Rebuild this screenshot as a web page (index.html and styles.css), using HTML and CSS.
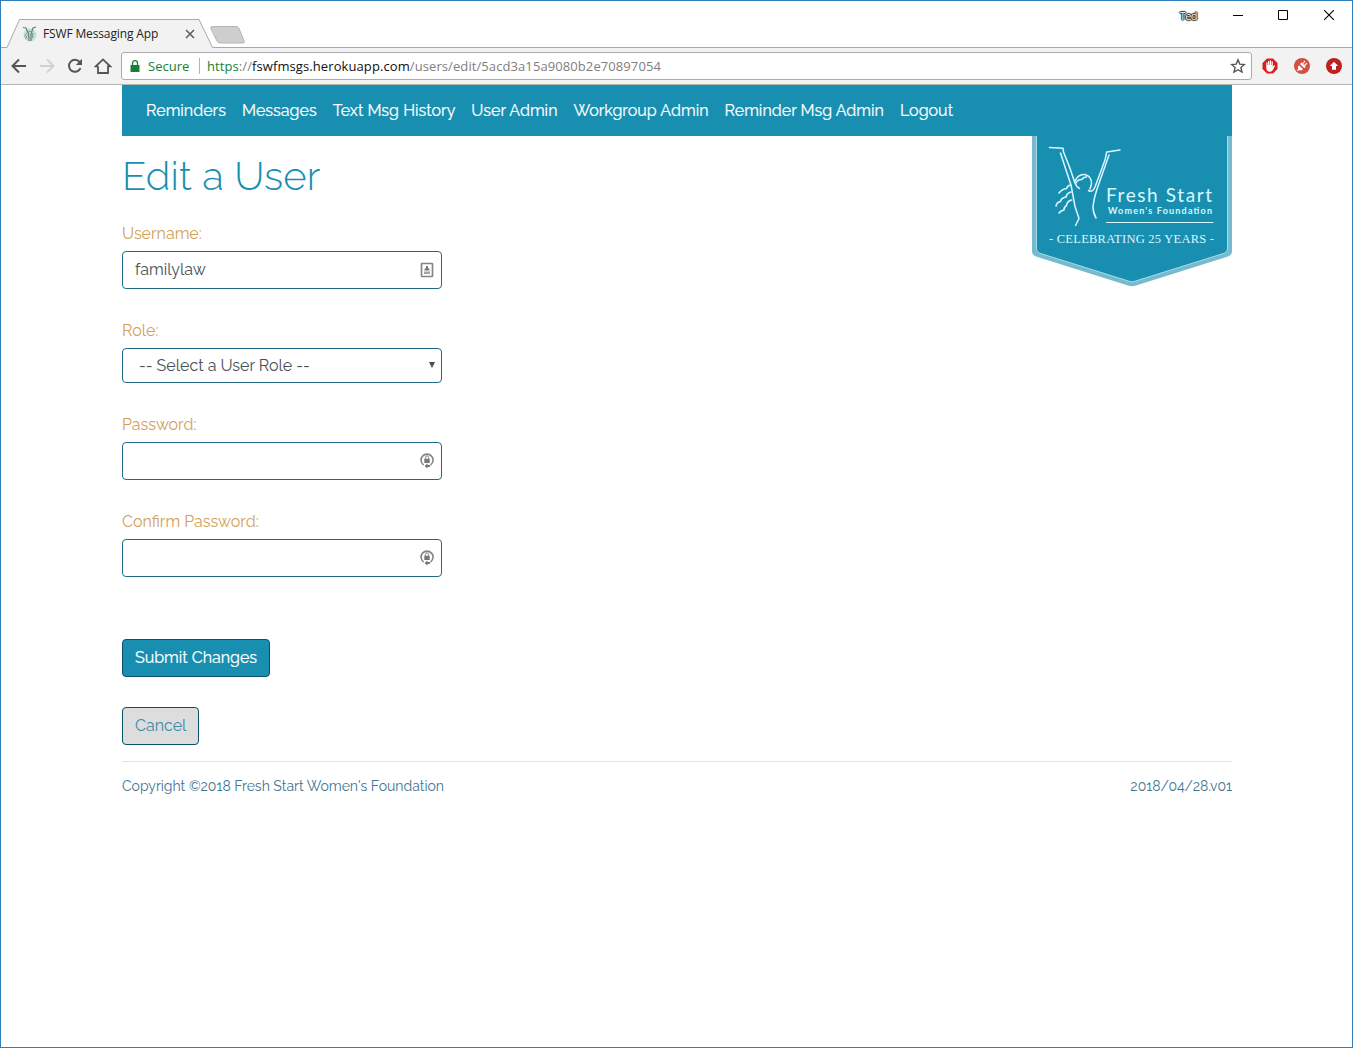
FILE: index.html
```html
<!DOCTYPE html>
<html lang="en">
<head>
<meta charset="utf-8">
<title>FSWF Messaging App</title>
<link rel="stylesheet" href="styles.css">
</head>
<body>
<div class="window">
  <header class="tabstrip">
    <div class="tab">
      <svg class="tab-shape" width="206" height="29" viewBox="0 0 206 29"><path d="M0 28.500L12.500 0.500H192L205.500 28.500V29H0Z" fill="#f2f2f2"/><path d="M0 28.500L12.500 0.500H192L205.500 28.500" fill="none" stroke="#a9a9a9"/></svg>
      <svg class="favicon" width="16" height="16" viewBox="0 0 16 16"><circle cx="8" cy="9" r="6.500" fill="#b9e3d3"/><path d="M1 1.500l3 .5 2.500 6 .5 7M14 1l-3 1-2 6v7" fill="none" stroke="#6d7b78" stroke-width="1.200"/><path d="M5.500 7c1-2 4-2 4.500 0M4.500 7.500l-2 3M5 10l-1.500 3M11 7l-.5 5" fill="none" stroke="#7d8d89"/></svg>
      <span class="tab-title">FSWF Messaging App</span>
      <svg class="tab-close" width="10" height="10" viewBox="0 0 10 10"><path d="M1 1l8 8M9 1l-8 8" stroke="#5a5a5a" stroke-width="1.500"/></svg>
    </div>
    <svg class="new-tab" width="36" height="18" viewBox="0 0 36 18"><path d="M2.500.5H26q2 0 3 2l5 12q1 2.500-1 2.500H10q-2 0-3-2L1 3Q0 .5 2.500.5Z" fill="#cecece" stroke="#b5b5b5"/></svg>
    <div class="controls">
      <span class="profile">Ted</span>
      <svg width="10" height="10" viewBox="0 0 10 10"><path d="M0 5.500h10" stroke="#000"/></svg>
      <svg width="10" height="10" viewBox="0 0 10 10"><path d="M.5.500h9v9h-9z" fill="none" stroke="#000"/></svg>
      <svg width="10" height="10" viewBox="0 0 10 10"><path d="M0 0l10 10M10 0L0 10" stroke="#000" stroke-width="1.100"/></svg>
    </div>
  </header>
  <div class="toolbar">
    <div class="tools">
      <svg width="16" height="16" viewBox="0 0 16 16"><path d="M15 8H2M8 1.500L1.500 8 8 14.500" fill="none" stroke="#555" stroke-width="2"/></svg>
      <svg width="16" height="16" viewBox="0 0 16 16"><path d="M1 8h13M8 1.500L14.500 8 8 14.500" fill="none" stroke="#d2d2d2" stroke-width="2"/></svg>
      <svg width="16" height="16" viewBox="0 0 16 16"><path d="M13.500 10.200A6 6 0 1 1 12.600 4" fill="none" stroke="#555" stroke-width="2"/><path d="M15 .8V7H8.800z" fill="#555"/></svg>
      <svg class="home" width="18" height="16" viewBox="0 0 18 16"><path d="M4 8.300H1.800L9 1.400l7.200 6.900H14V15H4V8.300" fill="none" stroke="#555" stroke-width="1.800"/></svg>
    </div>
    <div class="omnibox">
      <svg width="10" height="12" viewBox="0 0 10 12"><path d="M.5 5h9v7h-9z" fill="#188038"/><path d="M2.500 5.500V3.200a2.500 2.500 0 0 1 5 0v2.300" fill="none" stroke="#188038" stroke-width="1.300"/></svg>
      <span class="secure">Secure</span>
      <span class="url"><span class="scheme">https</span><span>://</span><span class="host">fswfmsgs.herokuapp.com</span><span class="path">/users/edit/5acd3a15a9080b2e70897054</span></span>
      <svg class="star" width="16" height="16" viewBox="0 0 16 16"><path d="M8 1.800l1.800 4.300 4.600.4-3.500 3 1.100 4.600L8 11.700l-4 2.400 1.100-4.600-3.500-3 4.600-.4z" fill="none" stroke="#555" stroke-width="1.400"/></svg>
    </div>
    <div class="extensions">
      <svg width="16" height="16" viewBox="0 0 16 16"><path d="M5 .5h6l4.500 4.500v6L11 15.500H5L.5 11V5z" fill="#d81e1e"/><path d="M4.300 7.500V4.700q.7-.9 1.200 0V7h.5V3.200q.7-.9 1.300 0V7h.5V2.700q.7-.9 1.300 0V7h.5V3.600q.7-.9 1.200 0v5.100l1-1.200q.9-.4 1.200.4L11 11.700q-1 2-3.200 2.100Q4.500 13.800 4.300 10z" fill="#fff"/></svg>
      <svg width="16" height="16" viewBox="0 0 16 16"><circle cx="8" cy="8" r="8" fill="#d05045"/><path d="M5 7.200l4 4q-2 1.800-4 .9L3.700 13.300 2.800 12.400 4.200 11Q3.300 9 5 7.200zM6 6l4.300 4.300 1.500-1.800L7.600 4.500z" fill="#fff"/><path d="M8.700 5.700l2.400-2.500M10.500 7.500l2.500-2.400" stroke="#fff" stroke-width="1.200"/></svg>
      <svg width="16" height="16" viewBox="0 0 16 16"><circle cx="8" cy="8" r="8" fill="#bd2020"/><path d="M8 3.800l4.200 4.200H10v3.800H6V8H3.800z" fill="#fff"/></svg>
    </div>
  </div>
  <div class="container">
    <nav class="navbar">
      <a>Reminders</a><a>Messages</a><a>Text Msg History</a><a>User Admin</a><a>Workgroup Admin</a><a>Reminder Msg Admin</a><a>Logout</a>
      <svg class="badge" width="200" height="151" viewBox="0 0 200 151">
        <path d="M0 0H200V115Q200 119 196 120.500L104 149.500Q100 151 96 149.500L4 120.500Q0 119 0 115Z" fill="#75bace"/>
        <path d="M4.500 -2H195.500V113Q195.500 116 192 117.300L102 145.500Q100 146.200 98 145.500L8 117.300Q4.500 116 4.500 113Z" fill="#188fb1" stroke="#a9dae7"/>
        <g fill="none" stroke="#d9f8ff" stroke-width="1.500" stroke-linecap="round" stroke-linejoin="round">
          <path d="M17.500 11.500L31 12.200 31.500 16 37.500 31 43 47Q44.500 51 47.500 52.500"/>
          <path d="M28.500 17L34.500 35.500 39 49 43 70.500 47 82.500 43.500 89.500"/>
          <path d="M88 14L74.700 16 73 24 63 51Q60.500 57 56.500 54.500"/>
          <path d="M77 19L71 36 64.700 54Q62 62 61 70.500 61 77 64 82"/>
          <path d="M42.500 46Q46 37.500 53 38.500 60 40.500 59.500 48 58.500 51 58 53M44 47Q46 43 50 43.500 51 41 54.500 41"/>
          <path d="M38.500 49Q35.500 49.500 34.500 52.500 30 53 27 57M39 56Q35 57 34 61 29 62 28.500 65.500 25 66 24 70M39.700 64Q35 65 34.500 69.500 32 71 32 74 29 74.500 27 77" stroke-width="1.600"/>
          <path d="M74.500 86.500H181" stroke-width="1"/>
        </g>
        <g fill="#d9f8ff">
          <text x="74" y="66" class="logo-name" textLength="106">Fresh Start</text>
          <text x="76" y="78" class="logo-sub" textLength="104">Women's Foundation</text>
          <text x="17" y="107" class="logo-years" textLength="165">- CELEBRATING 25 YEARS -</text>
        </g>
      </svg>
    </nav>
    <main>
      <h1>Edit a User</h1>
      <form>
        <div class="group"><label>Username:</label>
          <div class="field"><span>familylaw</span>
            <svg width="14" height="16" viewBox="0 0 14 16"><path d="M2 1.500h10q.5 0 .5.500v12q0 .5-.5.500H2q-.5 0-.5-.500V2q0-.5.500-.500z" fill="#fff" stroke="#858585" stroke-width="1.700"/><path d="M6 4h2v2l1.500 1v1.500h-5V7L6 6z" fill="#777"/><path d="M4 9.500h6v2.500H4z" fill="#a5a5a5"/></svg></div></div>
        <div class="group"><label>Role:</label>
          <div class="field select"><span>-- Select a User Role --</span>
            <svg width="6" height="6" viewBox="0 0 6 6"><path d="M0 0h6L3 6z" fill="#454c52"/></svg></div></div>
        <div class="group"><label>Password:</label>
          <div class="field"><span></span>
            <svg class="lock" width="14" height="17" viewBox="0 0 14 17"><path d="M3.600 13A6 6 0 1 1 10.500 13" fill="none" stroke="#858585" stroke-width="1.600"/><path d="M4.500 14l3-2.500v1.600h2.500v1.800H7.500V16.500zM4.300 6.800h5.400V11H4.300z" fill="#777"/><path d="M5.400 7V5.500a1.600 1.600 0 0 1 3.200 0V7" fill="none" stroke="#858585"/></svg></div></div>
        <div class="group"><label>Confirm Password:</label>
          <div class="field"><span></span>
            <svg class="lock" width="14" height="17" viewBox="0 0 14 17"><path d="M3.600 13A6 6 0 1 1 10.500 13" fill="none" stroke="#858585" stroke-width="1.600"/><path d="M4.500 14l3-2.500v1.600h2.500v1.800H7.500V16.500zM4.300 6.800h5.400V11H4.300z" fill="#777"/><path d="M5.400 7V5.500a1.600 1.600 0 0 1 3.200 0V7" fill="none" stroke="#858585"/></svg></div></div>
        <button type="button" class="btn submit">Submit Changes</button>
        <button type="button" class="btn cancel">Cancel</button>
      </form>
    </main>
    <footer><span>Copyright ©2018 Fresh Start Women's Foundation</span><span>2018/04/28.v01</span></footer>
  </div>
</div>
</body>
</html>
```
FILE: styles.css
```css
* { box-sizing: border-box; }
body { margin: 0; font-family: Raleway, Lato, sans-serif; font-size: 16px; line-height: 24px; color: #495057; background: #fff; }
svg { display: block; flex: none; }
.window { width: 1353px; height: 1048px; border: 1px solid #2f7fbd; overflow: hidden; }

/* browser frame */
.tabstrip { height: 47px; display: flex; align-items: flex-end; border-bottom: 1px solid #a9a9a9; padding-left: 6px; font-family: "Open Sans", "Noto Sans", sans-serif; }
.tab { position: relative; width: 206px; height: 28px; display: flex; align-items: center; padding: 1px 0 0 15px; }
.tab-shape { position: absolute; left: 0; top: 0; }
.favicon, .tab-title, .tab-close { position: relative; }
.tab-title { margin-left: 5px; padding-top: 1px; width: 142px; font-size: 12px; line-height: 16px; color: #222; letter-spacing: -0.14px; white-space: nowrap; }
.new-tab { margin: 0 0 3px -3px; }
.controls { margin-left: auto; align-self: flex-start; display: flex; padding: 9px 18px 0 0; gap: 36px; }
.controls svg:first-of-type { margin-right: -1px; }
.profile { font-size: 11px; line-height: 12px; color: #fff; letter-spacing: -0.6px; text-shadow: 0 0 1px #000, 1px 0 1px #222, -1px 0 1px #222, 0 1px 1px #222, 0 -1px 1px #222; }
.toolbar { height: 37px; display: flex; align-items: center; background: #f2f2f2; border-bottom: 1px solid #b5b5b5; padding-left: 10px; font-family: "Open Sans", "Noto Sans", sans-serif; }
.tools { width: 110px; display: flex; gap: 12px; }
.home { margin-left: -1px; }
.omnibox { width: 1131px; height: 28px; display: flex; align-items: center; background: #fff; border: 1px solid #ababab; border-radius: 3px; padding: 0 5px 0 8px; font-size: 13px; }
.secure { margin-left: 8px; width: 52px; height: 16px; line-height: 16px; color: #188038; border-right: 1px solid #b3b3b3; }
.url { margin-left: 7px; color: #808080; white-space: nowrap; letter-spacing: .09px; }
.scheme { color: #188038; }
.host { color: #111; }
.star { margin-left: auto; }
.extensions { display: flex; gap: 16px; margin-left: 10px; }

/* application page */
.container { width: 1110px; margin-left: 121px; }
.navbar { position: relative; height: 51px; display: flex; align-items: center; padding-left: 16px; background: #188fb1; color: #fff; }
.navbar a { padding: 0 8px; white-space: nowrap; letter-spacing: .025px; -webkit-text-stroke: .2px #fff; }
.badge { position: absolute; right: 0; top: 51px; }
.logo-name { font: 19.500px "Noto Sans", sans-serif; font-stretch: condensed; }
.logo-name { font: 19px Lato, sans-serif; }
.logo-sub { font: 700 9px Lato, sans-serif; }
.logo-years { font: 12.500px "Liberation Serif", serif; }
main { padding-top: 16px; }
h1 { margin: 0 0 19px; font-size: 40px; line-height: 48px; font-weight: 300; color: #188fb1; letter-spacing: .1px; }
form { display: flex; flex-direction: column; align-items: flex-start; }
.group { width: 320px; margin-bottom: 27px; }
label { display: block; height: 24px; margin-bottom: 8px; padding-top: 3px; color: #d2a05a; }
.field { height: 38px; display: flex; align-items: center; justify-content: space-between; border: 1px solid #206a87; border-radius: 4px; padding: 0 7px 0 12px; }
.select { height: 35px; padding: 0 6px 0 16px; }
.select svg { margin-bottom: 2px; }
.lock { margin-bottom: 1px; }
.btn { height: 38px; border: 1px solid #0c5069; border-radius: 4px; padding: 0 12px; font: inherit; text-align: left; white-space: nowrap; }
.submit { width: 148px; margin-top: 35px; background: #188fb1; color: #fff; -webkit-text-stroke: .2px #fff; }
.cancel { width: 77px; margin-top: 30px; background: #ddd; color: #3c8ba8; }
footer { margin-top: 16px; border-top: 1px solid #e2e2e2; padding-top: 12px; display: flex; justify-content: space-between; font-size: 14px; color: #417593; }
```
